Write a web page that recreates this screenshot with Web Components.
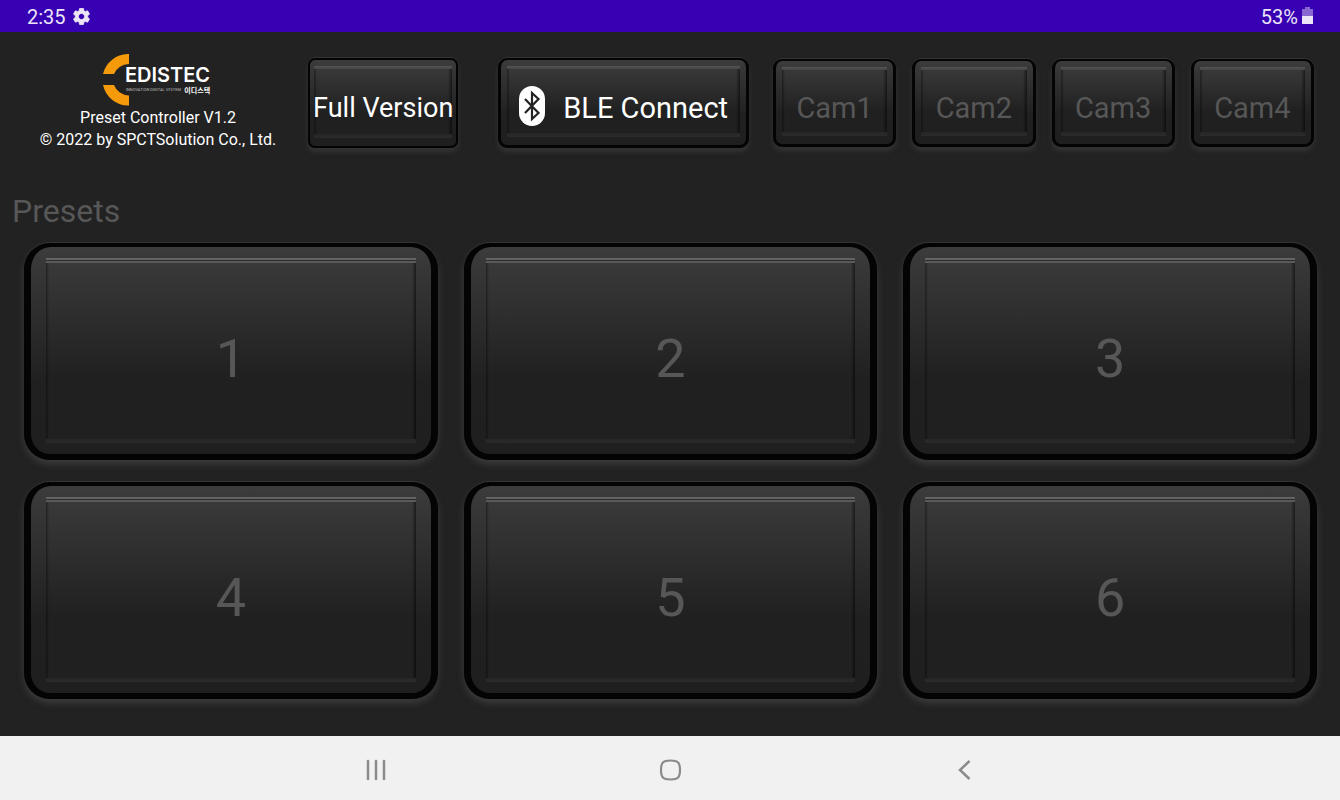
<!DOCTYPE html>
<html lang="en">
<head>
<meta charset="utf-8">
<meta name="viewport" content="width=device-width, initial-scale=1">
<title>Preset Controller</title>
<style>
    body {
        margin: 0;
        background: #222;
        font-family: Roboto, "Noto Sans CJK KR", sans-serif;
    }
</style>
</head>
<body>
<preset-app></preset-app>

<script>
class StatusBar extends HTMLElement {
    constructor() {
        super();
        this.attachShadow({ mode: 'open' });
    }

    connectedCallback() {
        this.shadowRoot.innerHTML = `
            <style>
                :host {
                    display: flex;
                    justify-content: space-between;
                    align-items: center;
                    height: 32px;
                    padding: 2px 27px 0;
                    box-sizing: border-box;
                    background: #3700b3;
                    color: #ebe5f7;
                    font-size: 20px;
                    line-height: 24px;
                }
                div {
                    display: flex;
                    align-items: center;
                }
                .left { gap: 7px; }
                .right { gap: 4px; }
                svg { display: block; }
                .gear { margin-bottom: 2px; }
                .battery { margin-bottom: 4px; }
            </style>
            <div class="left">
                <span>${this.getAttribute('time')}</span>
                <svg class="gear" width="17" height="17" viewBox="2 2 20 20" fill="currentColor" stroke="currentColor" aria-hidden="true"><path d="M19.14 12.94c.04-.3.06-.61.06-.94 0-.32-.02-.64-.07-.94l2.03-1.58c.18-.14.23-.41.12-.61l-1.92-3.32c-.12-.22-.37-.29-.59-.22l-2.39.96c-.5-.38-1.03-.7-1.62-.94l-.36-2.54c-.04-.24-.24-.41-.48-.41h-3.84c-.24 0-.43.17-.47.41l-.36 2.54c-.59.24-1.13.57-1.62.94l-2.39-.96c-.22-.08-.47 0-.59.22L2.74 8.87c-.12.21-.08.47.12.61l2.03 1.58c-.05.3-.09.63-.09.94s.02.64.07.94l-2.03 1.58c-.18.14-.23.41-.12.61l1.92 3.32c.12.22.37.29.59.22l2.39-.96c.5.38 1.03.7 1.62.94l.36 2.54c.05.24.24.41.48.41h3.84c.24 0 .44-.17.47-.41l.36-2.54c.59-.24 1.13-.56 1.62-.94l2.39.96c.22.08.47 0 .59-.22l1.92-3.32c.12-.22.07-.47-.12-.61l-2.01-1.58zM12 15.6c-1.98 0-3.6-1.62-3.6-3.6s1.62-3.6 3.6-3.6 3.6 1.62 3.6 3.6-1.62 3.6-3.6 3.6z"/></svg>
            </div>
            <div class="right">
                <span>${this.getAttribute('battery')}</span>
                <svg class="battery" width="11" height="17" viewBox="0 0 11 17" fill="currentColor" aria-hidden="true">
                    <path d="M3 0h5v2h3v7H0V2h3z" opacity=".45"/>
                    <path d="M0 9h11v7.500q0 .5-.5.5H.5Q0 17 0 16.500z"/>
                </svg>
            </div>
        `;
    }
}

class BrandBlock extends HTMLElement {
    constructor() {
        super();
        this.attachShadow({ mode: 'open' });
    }

    connectedCallback() {
        this.shadowRoot.innerHTML = `
            <style>
                :host {
                    display: flex;
                    flex-direction: column;
                    align-items: center;
                    color: #fff;
                    font-size: 16px;
                    line-height: 22px;
                    white-space: nowrap;
                }
                .logo {
                    display: flex;
                    align-items: center;
                    height: 52px;
                    padding-right: 3px;
                    margin-bottom: 1px;
                }
                .words {
                    margin-left: -4px;
                }
                .name {
                    font: 600 20px/20px Inter, sans-serif;
                }
                .sub {
                    display: flex;
                    align-items: center;
                    justify-content: space-between;
                    line-height: 10px;
                    padding-left: 1px;
                }
                .tagline {
                    font-size: 4px;
                    color: #bbb;
                }
                .korean {
                    font: 700 7px/10px "Noto Sans CJK KR", sans-serif;
                }
            </style>
            <div class="logo">
                <svg width="26" height="52" viewBox="0 0 26 52" fill="#f59b0b" aria-hidden="true">
                    <path d="M26 0v10A16 16 0 0 0 11 20H0A26 26 0 0 1 26 0z"/>
                    <path d="M26 51.500v-10A16 16 0 0 1 11 31H0A26 26 0 0 0 26 51.500z"/>
                </svg>
                <div class="words">
                    <div class="name">EDISTEC</div>
                    <div class="sub">
                        <span class="tagline">INNOVATION DIGITAL SYSTEM</span>
                        <span class="korean" lang="ko">이디스텍</span>
                    </div>
                </div>
            </div>
            <slot></slot>
        `;
    }
}

class BevelKey extends HTMLElement {
    constructor() {
        super();
        this.attachShadow({ mode: 'open' });
    }

    connectedCallback() {
        this.shadowRoot.innerHTML = `
            <style>
                :host {
                    display: flex;
                    min-width: 0;
                    --radius: 7px;
                    --edge: 2px;
                    --pad: 6px 4px 8px;
                    --drop: 13px;
                    --glow: 0 4px 5px #343434;
                    --rim: linear-gradient(#555, #434343) 0 0 / 100% 3px no-repeat;
                    font-size: 27px;
                }
                :host([size="medium"]) {
                    --radius: 9px;
                    --edge: 2px 3px 3px;
                    --pad: 6px 6px 8px;
                    --drop: 14px;
                    font-size: 29px;
                }
                :host([size="large"]) {
                    --radius: 26px;
                    --edge: 4px 7px 6px;
                    --pad: 11px 15px 11px;
                    --drop: 16px;
                    --glow: 0 4px 7px #3c3c3c;
                    --rim: linear-gradient(#636363 0 2px, #2c2c2c 2px 3px, #5a5a5a 3px 5px) 0 0 / 100% 5px no-repeat;
                    font-size: 54px;
                }
                button {
                    flex: 1;
                    display: flex;
                    min-width: 0;
                    margin: 0;
                    padding: var(--pad);
                    border: solid #040404;
                    border-width: var(--edge);
                    border-radius: var(--radius);
                    background: linear-gradient(#3c3c3c, #363636 12%, #202020 65%, #1f1f1f) padding-box;
                    box-shadow: 0 -1px 0 #343434, var(--glow);
                    color: #fff;
                    font: inherit;
                    cursor: pointer;
                }
                button:disabled {
                    color: #575757;
                    cursor: default;
                }
                .face {
                    flex: 1;
                    display: flex;
                    align-items: center;
                    justify-content: center;
                    gap: 18px;
                    min-width: 0;
                    padding-top: var(--drop);
                    white-space: nowrap;
                    background:
                        var(--rim),
                        linear-gradient(#262626, #2b2b2b) 0 100% / 100% 4px no-repeat,
                        linear-gradient(90deg, #0006, #0000) 0 0 / 3px 100% no-repeat,
                        linear-gradient(270deg, #0008, #0000) 100% 0 / 4px 100% no-repeat,
                        linear-gradient(#3a3a3a, #202020 65%, #202020);
                }
                ::slotted(svg) {
                    flex: none;
                    margin-bottom: 4px;
                }
            </style>
            <button type="button" ${this.hasAttribute('disabled') ? 'disabled' : ''}>
                <span class="face"><slot name="icon"></slot><slot></slot></span>
            </button>
        `;
    }
}

class NavBar extends HTMLElement {
    constructor() {
        super();
        this.attachShadow({ mode: 'open' });
    }

    connectedCallback() {
        this.shadowRoot.innerHTML = `
            <style>
                :host {
                    display: flex;
                    justify-content: center;
                    height: 64px;
                    background: #f1f1f1;
                }
                button {
                    flex: 0 1 22%;
                    display: flex;
                    align-items: center;
                    justify-content: center;
                    padding: 3px 0 0;
                    border: 0;
                    background: none;
                    cursor: pointer;
                }
                svg {
                    fill: none;
                    stroke: #8b8b8b;
                    stroke-width: 2.200;
                }
            </style>
            <button type="button" aria-label="Recents">
                <svg width="24" height="24" viewBox="0 0 24 24"><path d="M5 3v18M13 3v18M21 3v18" stroke-linecap="round" stroke-width="2.500"/></svg>
            </button>
            <button type="button" aria-label="Home">
                <svg width="24" height="24" viewBox="0 0 24 24"><path d="M12.500 2.500c7.500 0 9.500 2 9.500 9.500s-2 9.500-9.500 9.500-9.500-2-9.500-9.500 2-9.500 9.500-9.500z"/></svg>
            </button>
            <button type="button" aria-label="Back">
                <svg width="24" height="24" viewBox="0 0 24 24"><path d="M16.500 3l-9.500 9 9.500 9" stroke-width="2.500"/></svg>
            </button>
        `;
    }
}

class PresetApp extends HTMLElement {
    constructor() {
        super();
        this.attachShadow({ mode: 'open' });
        this.cams = ['Cam1', 'Cam2', 'Cam3', 'Cam4'];
        this.presets = [1, 2, 3, 4, 5, 6];
    }

    connectedCallback() {
        this.shadowRoot.innerHTML = `
            <style>
                :host {
                    display: flex;
                    flex-direction: column;
                    min-height: 100vh;
                }
                main {
                    flex: 1;
                    display: flex;
                    flex-direction: column;
                    padding: 22px 0 37px;
                }
                header {
                    display: grid;
                    grid-template-columns: 308fr 441fr 565fr;
                    align-items: center;
                    padding-right: 26px;
                }
                brand-block {
                    padding-left: 8px;
                }
                .actions {
                    display: grid;
                    grid-template-columns: minmax(0, 3fr) minmax(0, 5fr);
                    gap: 40px;
                }
                .actions bevel-key {
                    min-height: 90px;
                }
                .cams {
                    display: grid;
                    grid-template-columns: repeat(4, 1fr);
                    gap: 16px;
                    margin-left: 24px;
                }
                .cams bevel-key {
                    min-height: 88px;
                }
                h1 {
                    margin: 41px 12px 13px;
                    color: #575757;
                    font-size: 32px;
                    font-weight: 400;
                    line-height: 38px;
                }
                .presets {
                    flex: 1;
                    display: grid;
                    grid-template-columns: repeat(3, 1fr);
                    grid-auto-rows: 1fr;
                    gap: 22px 26px;
                    padding: 0 23px 0 24px;
                }
            </style>
            <status-bar time="2:35" battery="53%"></status-bar>
            <main>
                <header>
                    <brand-block>
                        <span>Preset Controller V1.2</span>
                        <span>© 2022 by SPCTSolution Co., Ltd.</span>
                    </brand-block>
                    <div class="actions">
                        <bevel-key>Full Version</bevel-key>
                        <bevel-key size="medium">
                            <svg slot="icon" width="26" height="40" viewBox="0 0 26 40" aria-hidden="true">
                                <rect width="26" height="40" rx="13" fill="#fff"/>
                                <path d="M6 13l13.500 14-6.500 6V7l6.500 6L6 27" fill="none" stroke="#222" stroke-width="2.200"/>
                            </svg>BLE Connect</bevel-key>
                    </div>
                    <div class="cams">
                        ${this.cams.map(name => `<bevel-key size="medium" disabled>${name}</bevel-key>`).join('')}
                    </div>
                </header>
                <h1>Presets</h1>
                <section class="presets">
                    ${this.presets.map(n => `<bevel-key size="large" disabled>${n}</bevel-key>`).join('')}
                </section>
            </main>
            <nav-bar></nav-bar>
        `;
    }
}

customElements.define('status-bar', StatusBar);
customElements.define('brand-block', BrandBlock);
customElements.define('bevel-key', BevelKey);
customElements.define('nav-bar', NavBar);
customElements.define('preset-app', PresetApp);
</script>
</body>
</html>
